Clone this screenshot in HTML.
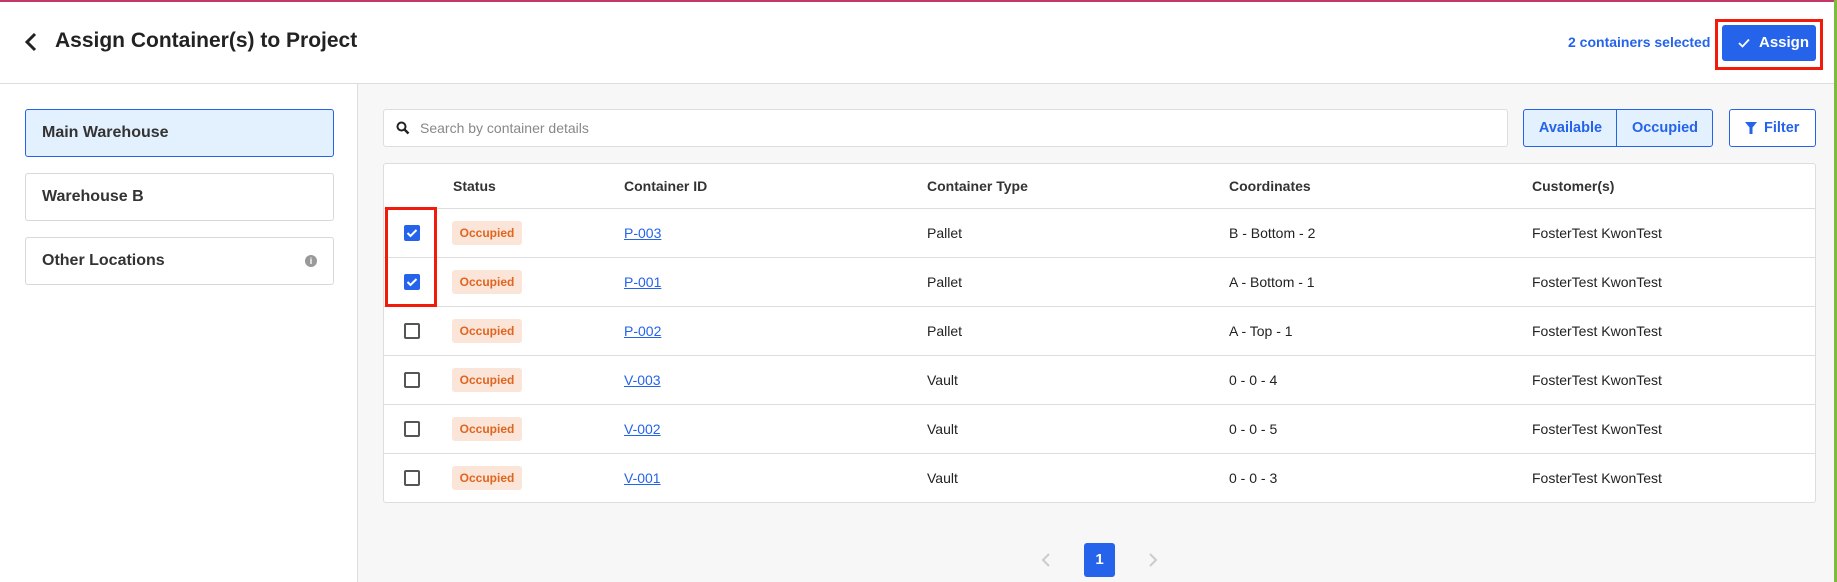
<!DOCTYPE html>
<html><head><meta charset="utf-8"><style>
*{box-sizing:border-box;margin:0;padding:0}
body{width:1837px;height:582px;overflow:hidden;background:#f7f7f7;font-family:"Liberation Sans",sans-serif;color:#222;position:relative}
.abs{position:absolute}
.hdr{left:0;top:0;width:1837px;height:84px;background:#fff;border-top:2px solid #c2386a;border-bottom:1px solid #ddd}
.side{left:0;top:84px;width:358px;height:498px;background:#fff;border-right:1px solid #ddd}
.loc{position:absolute;left:25px;width:309px;height:48px;border:1px solid #d8d8d8;border-radius:3px;background:#fff;font-size:16px;font-weight:bold;color:#333;padding-left:16px;line-height:46px}
.tbl{left:383px;top:163px;width:1433px;height:340px;background:#fff;border:1px solid #ddd;border-radius:3px}
.row{position:absolute;left:0;width:1431px;height:49px;border-top:1px solid #ddd;font-size:14px}
.row span{position:absolute;top:0;line-height:48px}
.cb{position:absolute;left:20px;top:16px;width:16px;height:16px;border:2px solid #555;border-radius:2px;background:#fff}
.cb.on{background:#2563eb;border-color:#2563eb}
.badge{position:absolute;left:68px;top:12px;width:70px;height:24px;background:#fbe5d8;color:#e0651f;border-radius:3px;font-size:12px;font-weight:bold;text-align:center;line-height:24px}
a{color:#2563eb;text-decoration:underline}
.th{font-size:14px;font-weight:bold;color:#333}
</style></head><body>
<div class="abs hdr"></div>
<svg class="abs" style="left:24px;top:32px" width="14" height="20" viewBox="0 0 14 20"><path d="M11 2L3 10L11 18" stroke="#222" stroke-width="3" fill="none"/></svg>
<div class="abs" style="left:55px;top:29px;font-size:21px;font-weight:bold;color:#222">Assign Container(s) to Project</div>
<div class="abs" style="left:1568px;top:34px;font-size:14px;font-weight:bold;color:#2563eb">2 containers selected</div>
<div class="abs" style="left:1715px;top:19px;width:108px;height:51px;border:3px solid #f21a0a"></div>
<div class="abs" style="left:1722px;top:25px;width:94px;height:36px;background:#2563eb;border-radius:3px;color:#fff;font-size:15px;font-weight:bold;line-height:36px;padding-left:37px">Assign</div>
<svg class="abs" style="left:1738px;top:38px" width="12" height="10" viewBox="0 0 12 10"><path d="M1 5l3.5 3.5L11 1.5" stroke="#fff" stroke-width="1.8" fill="none"/></svg>
<div class="abs" style="left:1834px;top:0;width:3px;height:582px;background:#7dbb3c"></div>
<div class="abs side"></div>
<div class="loc" style="top:109px;background:#e3f0fd;border-color:#2563eb">Main Warehouse</div>
<div class="loc" style="top:173px">Warehouse B</div>
<div class="loc" style="top:237px">Other Locations<span style="position:absolute;left:279px;top:17px;width:12px;height:12px;border-radius:50%;background:#999;color:#fff;font-size:9px;line-height:12px;text-align:center">i</span></div>
<div class="abs" style="left:383px;top:109px;width:1125px;height:38px;background:#fff;border:1px solid #ddd;border-radius:3px"></div>
<svg class="abs" style="left:396px;top:121px" width="14" height="14" viewBox="0 0 14 14"><circle cx="5.5" cy="5.5" r="4" stroke="#222" stroke-width="2" fill="none"/><path d="M8.5 8.5L12.5 12.5" stroke="#222" stroke-width="2.4"/></svg>
<div class="abs" style="left:420px;top:120px;font-size:14px;color:#888">Search by container details</div>
<div class="abs" style="left:1523px;top:109px;width:190px;height:38px;background:#e3f0fd;border:1px solid #2563eb;border-radius:3px;color:#2563eb;font-size:14.5px;font-weight:bold;line-height:36px">
<span style="position:absolute;left:0;width:93px;text-align:center">Available</span><span style="position:absolute;left:92px;top:0;width:1px;height:36px;background:#2563eb"></span><span style="position:absolute;left:93px;width:96px;text-align:center">Occupied</span></div>
<div class="abs" style="left:1729px;top:109px;width:87px;height:38px;background:#fff;border:1px solid #2563eb;border-radius:3px;color:#2563eb;font-size:14.5px;font-weight:bold;line-height:36px;padding-left:34px">Filter</div>
<svg class="abs" style="left:1745px;top:122px" width="12" height="12" viewBox="0 0 12 12"><path d="M0 0H12L7.5 5.5V12H4.5V5.5Z" fill="#2563eb"/></svg>
<div class="abs tbl">
<div class="row th" style="top:0;border-top:none;height:45px"><span style="left:69px;line-height:45px">Status</span><span style="left:240px;line-height:45px">Container ID</span><span style="left:543px;line-height:45px">Container Type</span><span style="left:845px;line-height:45px">Coordinates</span><span style="left:1148px;line-height:45px">Customer(s)</span></div>
<div class="row" style="top:44px"><div class="cb on"></div><div class="badge">Occupied</div><span style="left:240px"><a>P-003</a></span><span style="left:543px">Pallet</span><span style="left:845px">B - Bottom - 2</span><span style="left:1148px">FosterTest KwonTest</span></div>
<div class="row" style="top:93px"><div class="cb on"></div><div class="badge">Occupied</div><span style="left:240px"><a>P-001</a></span><span style="left:543px">Pallet</span><span style="left:845px">A - Bottom - 1</span><span style="left:1148px">FosterTest KwonTest</span></div>
<div class="row" style="top:142px"><div class="cb"></div><div class="badge">Occupied</div><span style="left:240px"><a>P-002</a></span><span style="left:543px">Pallet</span><span style="left:845px">A - Top - 1</span><span style="left:1148px">FosterTest KwonTest</span></div>
<div class="row" style="top:191px"><div class="cb"></div><div class="badge">Occupied</div><span style="left:240px"><a>V-003</a></span><span style="left:543px">Vault</span><span style="left:845px">0 - 0 - 4</span><span style="left:1148px">FosterTest KwonTest</span></div>
<div class="row" style="top:240px"><div class="cb"></div><div class="badge">Occupied</div><span style="left:240px"><a>V-002</a></span><span style="left:543px">Vault</span><span style="left:845px">0 - 0 - 5</span><span style="left:1148px">FosterTest KwonTest</span></div>
<div class="row" style="top:289px"><div class="cb"></div><div class="badge">Occupied</div><span style="left:240px"><a>V-001</a></span><span style="left:543px">Vault</span><span style="left:845px">0 - 0 - 3</span><span style="left:1148px">FosterTest KwonTest</span></div>
</div>
<div class="abs" style="left:385px;top:207px;width:52px;height:100px;border:3px solid #f21a0a"></div>
<svg class="abs" style="left:406px;top:228px" width="12" height="10" viewBox="0 0 12 10"><path d="M1.5 5l3 3L10.5 2" stroke="#fff" stroke-width="2" fill="none"/></svg>
<svg class="abs" style="left:406px;top:277px" width="12" height="10" viewBox="0 0 12 10"><path d="M1.5 5l3 3L10.5 2" stroke="#fff" stroke-width="2" fill="none"/></svg>
<svg class="abs" style="left:1041px;top:553px" width="10" height="14" viewBox="0 0 10 14"><path d="M8 1L2 7L8 13" stroke="#ccc" stroke-width="2" fill="none"/></svg>
<div class="abs" style="left:1084px;top:543px;width:31px;height:34px;background:#2563eb;border-radius:3px;color:#fff;font-size:15px;font-weight:bold;text-align:center;line-height:34px">1</div>
<svg class="abs" style="left:1148px;top:553px" width="10" height="14" viewBox="0 0 10 14"><path d="M2 1L8 7L2 13" stroke="#ccc" stroke-width="2" fill="none"/></svg>
</body></html>
